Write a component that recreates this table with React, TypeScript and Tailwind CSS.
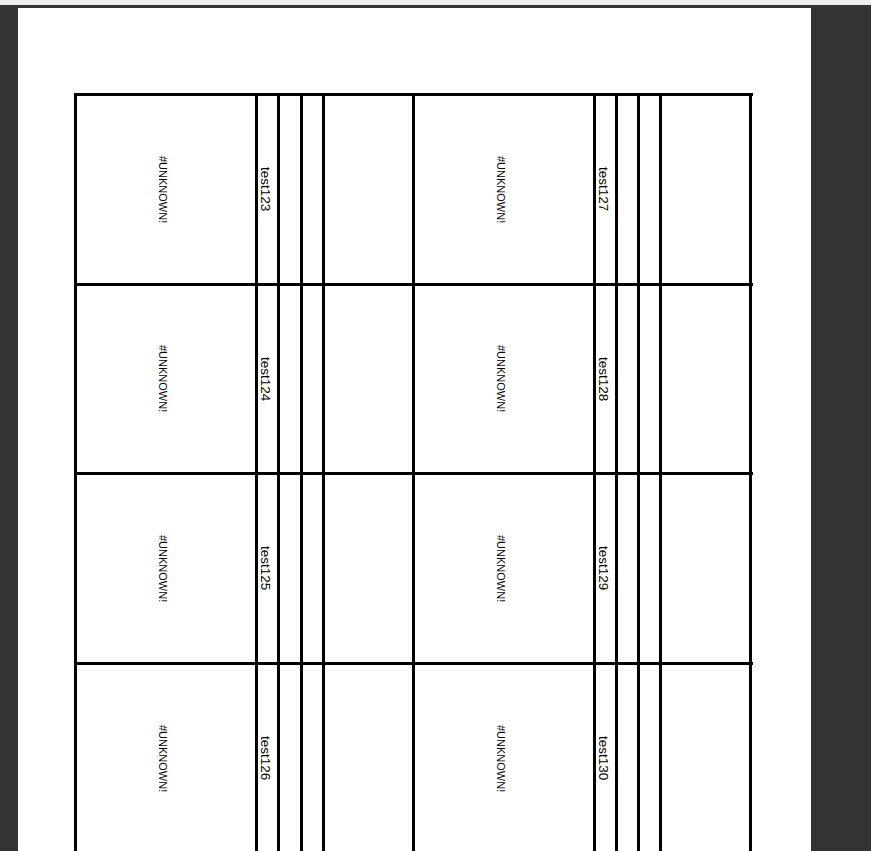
const rows = [
  ['test123', 'test127'],
  ['test124', 'test128'],
  ['test125', 'test129'],
  ['test126', 'test130'],
]

const rowHeights = ['h-[190px]', 'h-[189px]', 'h-[190px]', 'h-[190px]']

function Unknown() {
  return (
    <div className="w-[181px] h-full border-l-[3px] border-black flex items-center justify-center pr-[7px]">
      <span className="[writing-mode:vertical-rl] text-[11px] leading-none text-black">#UNKNOWN!</span>
    </div>
  )
}

function Label({ text }: { text: string }) {
  return (
    <div className="w-[22px] h-full border-l-[3px] border-black flex items-center justify-start">
      <span className="[writing-mode:vertical-rl] text-[13.5px] leading-none text-black">{text}</span>
    </div>
  )
}

function Row({ left, right, height }: { left: string; right: string; height: string }) {
  return (
    <div className={`flex border-t-[3px] border-black ${height}`}>
      <Unknown />
      <Label text={left} />
      <div className="w-[23px] h-full border-l-[3px] border-black" />
      <div className="w-[22px] h-full border-l-[3px] border-black" />
      <div className="w-[90px] h-full border-l-[3px] border-black" />
      <Unknown />
      <Label text={right} />
      <div className="w-[22px] h-full border-l-[3px] border-black" />
      <div className="w-[22px] h-full border-l-[3px] border-black" />
      <div className="w-[93px] h-full border-x-[3px] border-black" />
    </div>
  )
}

export default function App() {
  return (
    <div className="w-[871px] h-[851px] overflow-hidden bg-[#333333] [font-family:Liberation_Sans,Arial,sans-serif]">
      <div className="h-[5px] bg-[#ededed]" />
      <div className="pt-[3px] pl-[18px]">
        <div className="w-[793px] h-[900px] bg-white pt-[85px] pl-[56px]">
          <div className="w-[679px]">
            {rows.map((r, i) => (
              <Row key={r[0]} left={r[0]} right={r[1]} height={rowHeights[i]} />
            ))}
          </div>
        </div>
      </div>
    </div>
  )
}
